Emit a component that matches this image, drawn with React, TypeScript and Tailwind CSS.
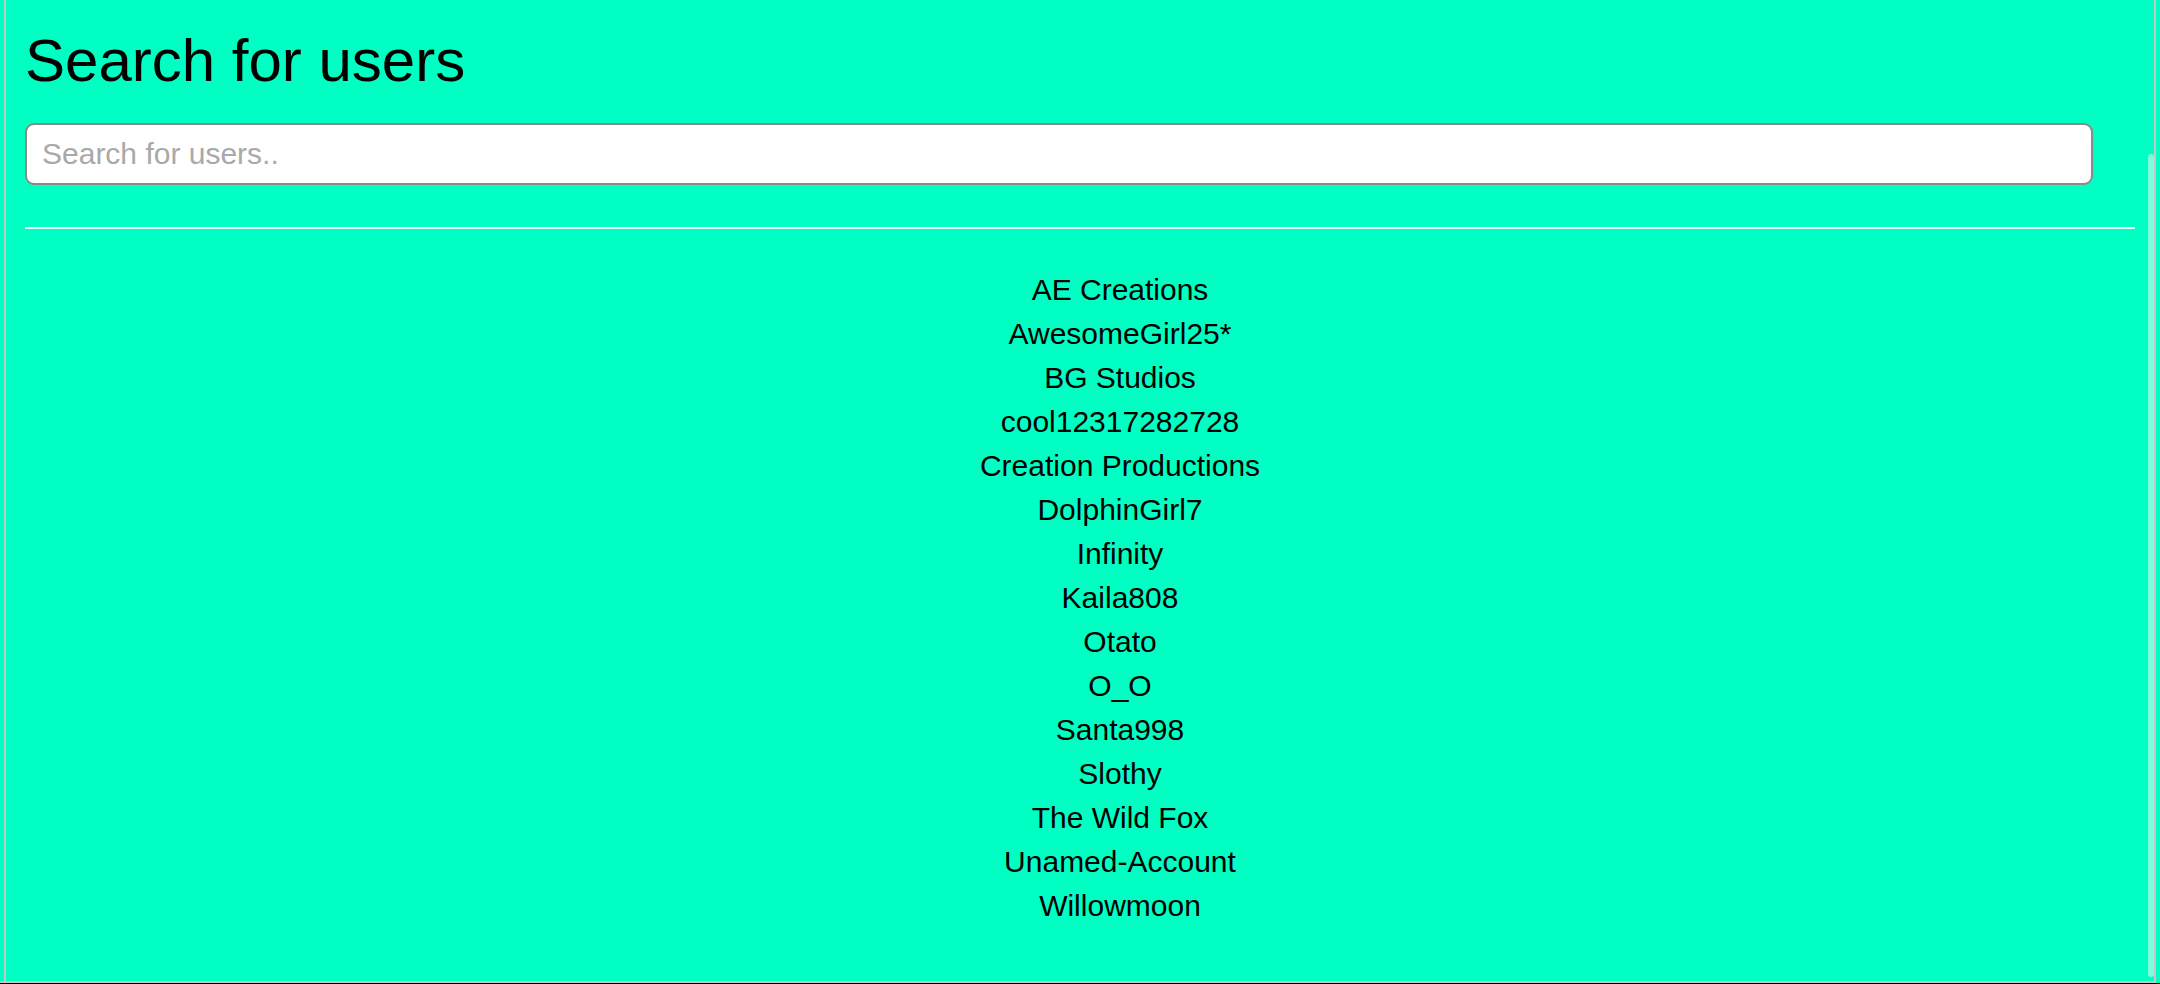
import React, { useState } from 'react';

const USERS = [
  'AE Creations',
  'AwesomeGirl25*',
  'BG Studios',
  'cool12317282728',
  'Creation Productions',
  'DolphinGirl7',
  'Infinity',
  'Kaila808',
  'Otato',
  'O_O',
  'Santa998',
  'Slothy',
  'The Wild Fox',
  'Unamed-Account',
  'Willowmoon',
];

const App: React.FC = () => {
  const [query, setQuery] = useState('');

  const filtered = USERS.filter((u) => u.toLowerCase().includes(query.toLowerCase()));

  return (
    <div className="relative h-[984px] w-[2160px] overflow-hidden bg-[#00ffc2] font-['Liberation_Sans',Arial,sans-serif] text-black">
      <div className="flex h-[981px] flex-col">
        <div className="mx-[4px] flex-1 border-x-2 border-[#c6c6c6] px-[19px]">
          <h1 className="mt-[26px] text-[60px] leading-[69px] font-normal">Search for users</h1>

          <input
            type="text"
            value={query}
            onChange={(e) => setQuery(e.target.value)}
            placeholder="Search for users.."
            className="mt-[28px] h-[62px] w-[98%] rounded-[9px] border-2 border-[#8a8a8a] bg-white px-[15px] text-[30px] text-black placeholder-[#a9a9a9] outline-none"
          />

          <div className="mt-[42px] h-[2px] bg-[#e6fff5]" />

          <ul className="mt-[39px] pl-[80px] text-center text-[30px] leading-[44px]">
            {filtered.map((u) => (
              <li key={u}>{u}</li>
            ))}
          </ul>
        </div>
      </div>
      <div className="mr-[4px] h-[2px] bg-[#c6c6c6]" />
      <div className="h-[1px] bg-black" />

      {/* scrollbar thumb */}
      <div className="absolute left-[2148px] top-[154px] h-[823px] w-[6px] rounded-full bg-[#80ffdf]" />
    </div>
  );
};

export default App;
